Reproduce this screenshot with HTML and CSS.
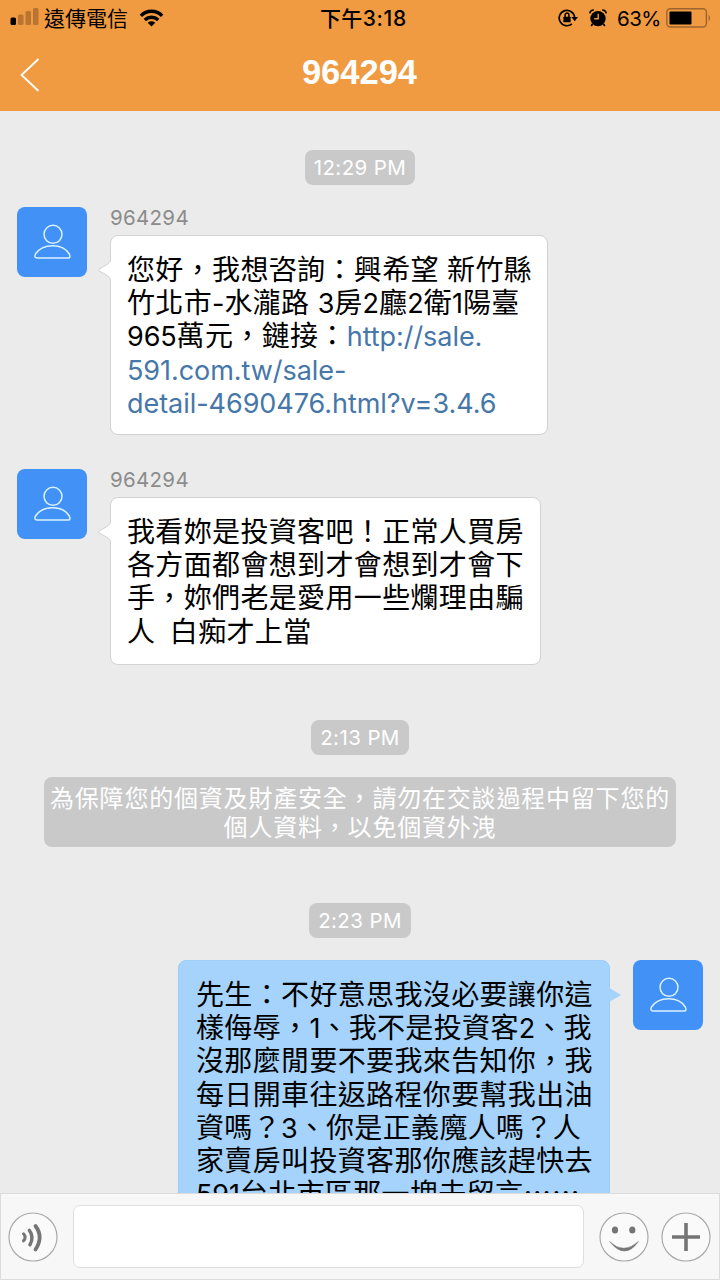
FILE: index.html
```html
<!DOCTYPE html>
<html lang="zh-TW">
<head>
  <meta charset="utf-8">
  <title>964294</title>
  <link rel="stylesheet" href="styles.css">
</head>
<body>
  <svg class="defs">
    <symbol id="person" viewBox="0 0 70 70">
      <g fill="none" stroke="#d9f2ff" stroke-width="1.5" stroke-linejoin="round">
        <ellipse cx="36" cy="27.3" rx="9" ry="9"/>
        <path d="M20 51 H51 C53.5 51 53.3 49 52.3 47 C49 41.5 43 38.7 35.7 38.7 C28 38.7 22 41.5 18.5 47 C17.5 49 17.6 51 20 51 Z"/>
      </g>
    </symbol>
  </svg>
  <header>
    <div class="status">
      <div class="left">
        <svg width="30" height="20" viewBox="0 0 30 20">
          <rect x="0.5" y="10.5" width="5.5" height="7.5" rx="1.5"/>
          <g fill="#b87430">
            <rect x="8" y="7.5" width="5.5" height="10.5" rx="1.5"/>
            <rect x="15.5" y="4" width="5.5" height="14" rx="1.5"/>
            <rect x="23" y="1" width="5.5" height="17" rx="1.5"/>
          </g>
        </svg>
        <span class="carrier">遠傳電信</span>
        <svg class="wifi" width="25" height="18" viewBox="0 0 26 19">
          <g fill="none" stroke="#000" stroke-width="3.6">
            <path d="M1.8 7.2 C8 0.8 18 0.8 24.2 7.2"/>
            <path d="M5.9 11.6 C10 7.8 16 7.8 20.1 11.6"/>
          </g>
          <path d="M9 14.6 Q13 11.5 17 14.6 L13 18.6 Z"/>
        </svg>
      </div>
      <div class="clock">下午<b>3:18</b></div>
      <div class="right">
        <svg width="20" height="18" viewBox="0 0 20 18">
          <path d="M13.9 14.9 A7.7 7.7 0 1 1 16.6 8.5" fill="none" stroke="#000" stroke-width="1.7"/>
          <path d="M13.4 8 H20 L16.7 12.3 Z"/>
          <rect x="5.4" y="7.7" width="7.2" height="5.6" rx="0.6"/>
          <path d="M7.1 8 V6 A1.9 1.9 0 0 1 10.9 6 V8" fill="none" stroke="#000" stroke-width="1.5"/>
        </svg>
        <svg class="alarm" width="18" height="18" viewBox="0 0 18 18">
          <circle cx="9" cy="9.6" r="7.7"/>
          <path d="M0.8 4.4 Q1.2 1 4.8 1 M17.2 4.4 Q16.8 1 13.2 1 M3.5 15 L2.2 17 M14.5 15 L15.8 17" fill="none" stroke="#000" stroke-width="1.7"/>
          <path d="M9.2 4.8 V9.8 H5.2" fill="none" stroke="#f09a41" stroke-width="1.4"/>
        </svg>
        <span class="percent">63%</span>
        <svg width="45" height="20" viewBox="0 0 45 20">
          <rect x="0.8" y="0.8" width="39.6" height="18.2" rx="3.5" fill="none" stroke="#9c6530" stroke-width="1.4"/>
          <rect x="3.5" y="3.6" width="22" height="12.8" rx="1"/>
          <path d="M42.6 6.5 Q45.6 9.9 42.6 13.3 Z" fill="#9c6530"/>
        </svg>
      </div>
    </div>
    <div class="title">
      <svg class="back" width="20" height="34" viewBox="0 0 20 34">
        <path d="M18.5 1 L1.5 17 L18.5 33" fill="none" stroke="#fff" stroke-width="1.8"/>
      </svg>
      <h1>964294</h1>
    </div>
  </header>

  <main>
    <time class="pill">12:29 PM</time>
    <div class="message first">
      <svg class="avatar"><use href="#person"/></svg>
      <div>
        <div class="name">964294</div>
        <div class="bubble wide">
          <svg class="tail" width="14" height="22" viewBox="0 0 14 22"><path d="M14 1 Q12.5 4 10.5 5.2 L2 10.2 Q0.7 11 2 11.8 L10.5 16.6 Q12.5 18 14 21" fill="#fff" stroke="#d2d2d2"/></svg>
          <p>您好，我想咨詢：興希望 新竹縣</p>
          <p>竹北市<i>-</i>水瀧路 <i>3</i>房<i>2</i>廳<i>2</i>衛<i>1</i>陽臺</p>
          <p><i>965</i>萬元，鏈接：<a>http://sale.</a></p>
          <p><a>591.com.tw/sale-</a></p>
          <p><a>detail-4690476.html?v=3.4.6</a></p>
        </div>
      </div>
    </div>
    <div class="message second">
      <svg class="avatar"><use href="#person"/></svg>
      <div>
        <div class="name">964294</div>
        <div class="bubble">
          <svg class="tail" width="14" height="22" viewBox="0 0 14 22"><path d="M14 1 Q12.5 4 10.5 5.2 L2 10.2 Q0.7 11 2 11.8 L10.5 16.6 Q12.5 18 14 21" fill="#fff" stroke="#d2d2d2"/></svg>
          <p>我看妳是投資客吧！正常人買房</p>
          <p>各方面都會想到才會想到才會下</p>
          <p>手，妳們老是愛用一些爛理由騙</p>
          <p>人&nbsp; 白痴才上當</p>
        </div>
      </div>
    </div>
    <time class="pill t213">2:13 PM</time>
    <div class="notice">為保障您的個資及財產安全，請勿在交談過程中留下您的<br>個人資料，以免個資外洩</div>
    <time class="pill t223">2:23 PM</time>
    <div class="message mine">
      <div class="bubble">
        <svg class="tail" width="14" height="22" viewBox="0 0 14 22"><path d="M0 1 Q1.5 4 3.5 5.2 L12 10.2 Q13.3 11 12 11.8 L3.5 16.6 Q1.5 18 0 21" fill="#a5d3fb"/></svg>
        <p>先生：不好意思我沒必要讓你這</p>
        <p>樣侮辱，<i>1</i>、我不是投資客<i>2</i>、我</p>
        <p>沒那麼閒要不要我來告知你，我</p>
        <p>每日開車往返路程你要幫我出油</p>
        <p>資嗎？<i>3</i>、你是正義魔人嗎？人</p>
        <p>家賣房叫投資客那你應該趕快去</p>
        <p><i>591</i>台北市區那一塊去留言<span class="cjk">……</span></p>
      </div>
      <svg class="avatar"><use href="#person"/></svg>
    </div>
  </main>

  <footer>
    <svg width="50" height="50" viewBox="0 0 50 50">
      <circle class="ring" cx="25" cy="25" r="24"/>
      <g fill="none" stroke="#757575" stroke-linecap="round">
        <path d="M15.5 21.8 Q18.8 25.3 15.5 28.8" stroke-width="3"/>
        <path d="M21.3 18.3 Q26.5 25.3 21.9 32.8" stroke-width="3.4"/>
        <path d="M27.5 14 Q35.8 25 27.5 37.5" stroke-width="3.8"/>
      </g>
    </svg>
    <div class="input"></div>
    <svg class="smile" width="50" height="50" viewBox="0 0 50 50">
      <circle class="ring" cx="25" cy="25" r="24"/>
      <g fill="#757575">
        <ellipse cx="16" cy="18" rx="3.1" ry="3.6"/>
        <ellipse cx="33.3" cy="18" rx="3.1" ry="3.6"/>
        <path d="M10.5 29.5 Q24.5 43 39.5 29.5 Q26 48.5 10.5 29.5 Z" stroke="#757575" stroke-width="0.5"/>
      </g>
    </svg>
    <svg width="50" height="50" viewBox="0 0 50 50">
      <circle class="ring" cx="25" cy="25" r="24"/>
      <path d="M11 25 H39 M25 11 V39" stroke="#757575" stroke-width="3.6"/>
    </svg>
  </footer>
</body>
</html>
```

FILE: styles.css
```css
* {
  box-sizing: border-box;
}
body {
  margin: 0;
  width: 720px;
  height: 1280px;
  display: flex;
  flex-direction: column;
  overflow: hidden;
  background: #ebebeb;
  color: #000;
  font-family: Inter, "Noto Sans CJK TC", sans-serif;
}
svg {
  display: block;
  flex: none;
}
p, h1 {
  margin: 0;
}
i {
  font-style: normal;
  font-size: 27px;
  line-height: 0;
  letter-spacing: -0.1px;
}
.defs {
  position: absolute;
  width: 0;
  height: 0;
}

/* header */
header {
  flex: none;
  height: 111px;
  background: #f09a41;
}
.status {
  display: flex;
  align-items: center;
  height: 36px;
  padding: 0 9px 0 10px;
}
.left, .right {
  flex: 1;
  display: flex;
  align-items: center;
}
.left svg {
  margin-top: -2px;
}
.carrier {
  margin: -2px 0 0 4px;
  font-size: 21px;
}
.left .wifi {
  margin-left: 11px;
  margin-top: -1px;
}
.clock {
  margin: -2px -3px 0 3px;
  font-size: 21px;
  font-weight: 500;
  letter-spacing: 0.3px;
}
.clock b {
  font-weight: 500;
  font-size: 21px;
  letter-spacing: 0.7px;
}
.right {
  justify-content: flex-end;
}
.right svg {
  margin-top: -1px;
}
.right .alarm {
  margin-left: 11px;
}
.percent {
  margin: 0 5px 0 10px;
  font-size: 20.5px;
  letter-spacing: -0.5px;
}
.title {
  display: flex;
  align-items: center;
  height: 72px;
  padding: 0 20px;
}
.back {
  margin-top: 5px;
}
.title h1 {
  flex: 1;
  padding-right: 21px;
  color: #fff;
  text-align: center;
  font: bold 34.5px "Liberation Sans", Arial, sans-serif;
}

/* conversation */
main {
  flex: 1;
  min-height: 0;
  overflow: hidden;
  display: flex;
  flex-direction: column;
  padding: 39px 17px 0;
}
.pill {
  flex: none;
  align-self: center;
  width: 110px;
  height: 35px;
  border-radius: 8px;
  background: #c9c9c9;
  color: #fff;
  font-size: 20.5px;
  line-height: 35px;
  letter-spacing: 0.4px;
  text-align: center;
}
.t213 {
  width: 98px;
  margin-top: 55px;
}
.t223 {
  width: 102px;
  margin-top: 56px;
}
.message {
  flex: none;
  display: flex;
  align-items: flex-start;
  gap: 23px;
}
.first {
  margin-top: 22px;
}
.second {
  margin-top: 34px;
}
.mine {
  margin-top: 22px;
  justify-content: flex-end;
}
.avatar {
  width: 70px;
  height: 70px;
  border-radius: 8px;
  background: #4191f7;
}
.name {
  height: 28px;
  color: #8c8c8c;
  font-size: 20.5px;
  line-height: 22px;
  letter-spacing: 0.3px;
}
.bubble {
  position: relative;
  width: 431px;
  height: 168px;
  padding: 18px 16px 14px;
  border: 1px solid #d2d2d2;
  border-radius: 8px;
  background: #fff;
  font-size: 28px;
  line-height: 33.2px;
  letter-spacing: 0.35px;
  white-space: nowrap;
}
.bubble p {
  height: 33.2px;
}
.wide {
  width: 438px;
  height: 200px;
}
.second .bubble {
  word-spacing: -1px;
}
.bubble a {
  color: #4677a9;
  font-size: 27px;
  line-height: 0;
  letter-spacing: -0.05px;
}
.tail {
  position: absolute;
  left: -14px;
  top: 23px;
}
.mine .bubble {
  width: 432px;
  height: auto;
  padding-left: 17px;
  border-color: #9ccdf5;
  background: #a5d3fb;
}
.mine .tail {
  left: auto;
  right: -13px;
}
.cjk {
  font-family: "Noto Sans CJK TC", sans-serif;
  line-height: 0;
}
.notice {
  flex: none;
  align-self: center;
  width: 632px;
  height: 70px;
  margin-top: 22px;
  padding-top: 7px;
  border-radius: 8px;
  background: #c9c9c9;
  color: #fff;
  font-size: 24px;
  line-height: 29px;
  letter-spacing: 0.8px;
  text-align: center;
  white-space: nowrap;
}

/* input bar */
footer {
  flex: none;
  display: flex;
  align-items: center;
  height: 87px;
  padding: 0 8px 0 7px;
  border: 1px solid #dcdcdc;
  background: #f7f7f7;
}
.ring {
  fill: #fafafa;
  stroke: #aaa;
  stroke-width: 1.2;
}
.input {
  flex: 1;
  height: 63px;
  margin: 0 15px;
  border: 1px solid #dedede;
  border-radius: 7px;
  background: #fff;
}
.smile {
  margin-right: 12px;
}
```
